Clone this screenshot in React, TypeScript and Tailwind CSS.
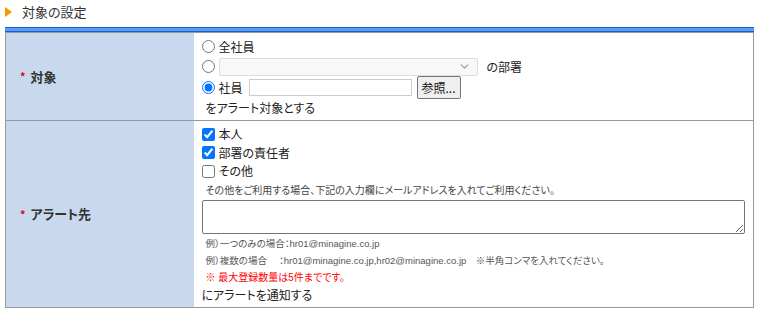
import { ChevronDown } from "lucide-react";

const font = {
  fontFamily: '"Noto Sans CJK JP", "Noto Sans", sans-serif',
  fontFeatureSettings: '"palt"',
};
const small = {
  fontFamily: '"Liberation Sans", "Noto Sans CJK JP", sans-serif',
  fontFeatureSettings: '"palt"',
};

function Label({ text }: { text: string }) {
  return (
    <td className="w-[188px] bg-[#c8d9ee] pl-[14px] align-middle">
      <div className="flex items-center gap-[5px]">
        <span className="text-[11px] font-bold leading-none text-[#e60012]">*</span>
        <span className="text-[13px] font-bold text-[#333]">{text}</span>
      </div>
    </td>
  );
}

export default function App() {
  return (
    <div className="h-[313px] w-[761px] bg-white text-[#222]" style={font}>
      <div className="flex h-[27px] items-center pb-[3px] pl-[5px]">
        <span className="h-0 w-0 border-y-[5px] border-l-[7px] border-y-transparent border-l-[#f39800]" />
        <span className="ml-[10px] text-[13px] text-[#333]">対象の設定</span>
      </div>
      <div className="mx-[5px] h-[5px] w-[749px] border-y border-[#1a5cd6] bg-[#5b9df2]" />
      <table className="ml-[5px] w-[749px] border-collapse border border-[#999]">
        <tbody>
          <tr className="h-[88px] border-b border-[#999]">
            <Label text="対象" />
            <td className="pl-[8px] pt-[5px] pb-[2px] align-top text-[12px]">
              <div className="flex h-[17px] items-center gap-[4px]">
                <input type="radio" name="t" className="m-0 h-[13px] w-[13px]" />
                <span>全社員</span>
              </div>
              <div className="mt-[2px] flex h-[19px] items-center gap-[4px]">
                <input type="radio" name="t" className="m-0 h-[13px] w-[13px]" />
                <div className="flex h-[18px] w-[259px] items-center justify-end rounded-[2px] border border-[#ddd] bg-[#f8f8f8] pr-[6px]">
                  <ChevronDown size={13} strokeWidth={2} className="text-[#999]" />
                </div>
                <span className="ml-[5px]">の部署</span>
              </div>
              <div className="flex h-[23px] items-center gap-[4px]">
                <input type="radio" name="t" defaultChecked className="m-0 h-[13px] w-[13px] accent-[#0075ff]" />
                <span>社員</span>
                <div className="ml-[2px] h-[17px] w-[163px] border border-[#ccc] bg-white" />
                <button className="ml-[1px] h-[23px] rounded-[2px] border border-[#767676] bg-[#efefef] px-[4px] text-[12px] text-[#111]">
                  参照...
                </button>
              </div>
              <div className="flex h-[17px] items-center pl-[4px]">をアラート対象とする</div>
            </td>
          </tr>
          <tr className="h-[187px]">
            <Label text="アラート先" />
            <td className="pl-[8px] pt-[4px] pb-[3px] pr-[8px] align-top text-[12px]">
              <div className="flex h-[18px] items-center gap-[4px]">
                <input type="checkbox" defaultChecked className="m-0 h-[13px] w-[13px]" />
                <span>本人</span>
              </div>
              <div className="flex h-[19px] items-center gap-[4px]">
                <input type="checkbox" defaultChecked className="m-0 h-[13px] w-[13px]" />
                <span>部署の責任者</span>
              </div>
              <div className="flex h-[18px] items-center gap-[4px]">
                <input type="checkbox" className="m-0 h-[13px] w-[13px]" />
                <span>その他</span>
              </div>
              <div className="flex h-[19px] items-center pl-[4px] text-[10px] text-[#444]">
                その他をご利用する場合、下記の入力欄にメールアドレスを入れてご利用ください。
              </div>
              <textarea className="mt-[1px] block h-[34px] w-[543px] rounded-[2px] border border-[#767676] bg-white" />
              <div className="mt-[2px] flex h-[17px] items-center pl-[4px] text-[9.5px] text-[#555]" style={small}>
                例）一つのみの場合：hr01@minagine.co.jp
              </div>
              <div className="flex h-[16px] items-center pl-[4px] text-[9.5px] text-[#555]" style={small}>
                例）複数の場合　 ：hr01@minagine.co.jp,hr02@minagine.co.jp　※半角コンマを入れてください。
              </div>
              <div className="flex h-[16px] items-center pl-[4px] text-[10px] text-[#ff0000]" style={small}>
                ※ 最大登録数量は5件までです。
              </div>
              <div className="flex h-[19px] items-center">にアラートを通知する</div>
            </td>
          </tr>
        </tbody>
      </table>
    </div>
  );
}
